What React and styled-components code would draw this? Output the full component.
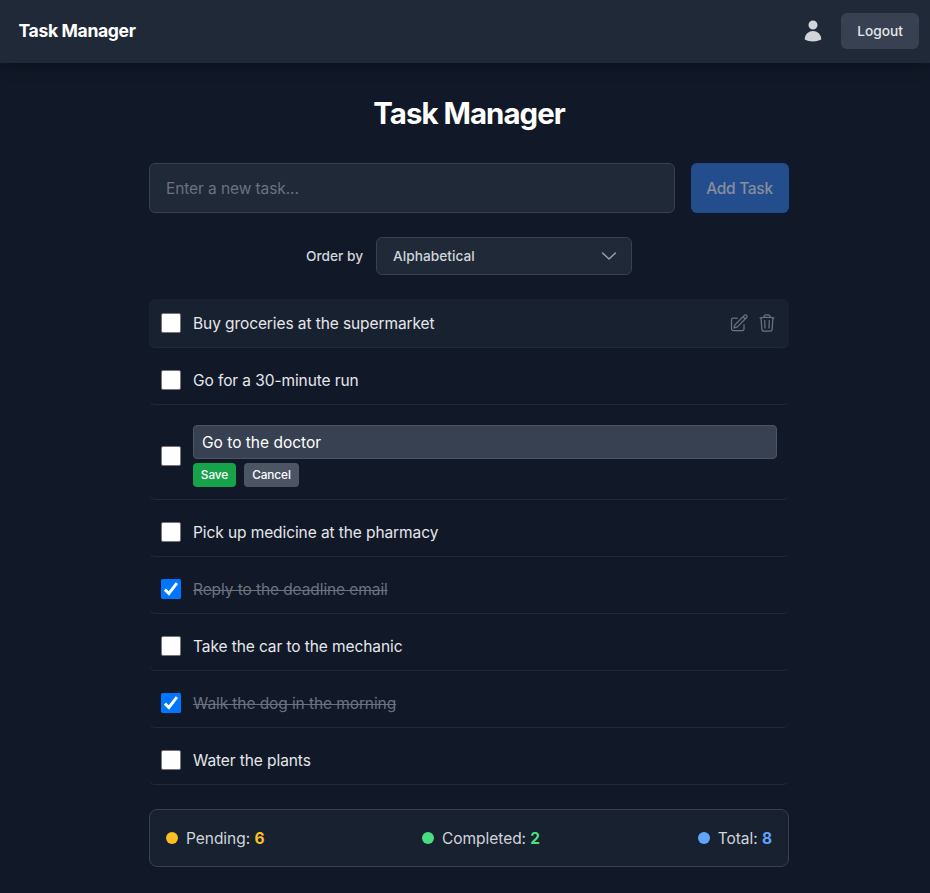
import React, { useState } from "react";
import styled, { createGlobalStyle } from "styled-components";
import { HiUser, HiOutlinePencilSquare, HiOutlineTrash } from "react-icons/hi2";

const GlobalStyle = createGlobalStyle`
  *, *::before, *::after { box-sizing: border-box; }
  body {
    margin: 0;
    background: #111827;
    color: #fff;
    font-family: Inter, "Liberation Sans", sans-serif;
    font-size: 15.5px;
    line-height: 24px;
    letter-spacing: -0.09px;
    overflow: hidden;
  }
  button, input { font: inherit; letter-spacing: inherit; }
`;

const Page = styled.div`
  min-height: 893px;
`;

const Header = styled.header`
  display: flex;
  align-items: center;
  justify-content: space-between;
  height: 63px;
  padding: 0 11px 1px 18.5px;
  background: #1f2937;
  box-shadow: 0 4px 6px -1px rgba(0, 0, 0, 0.1), 0 10px 15px -3px rgba(0, 0, 0, 0.1);
`;

const Brand = styled.span`
  font-size: 17.6px;
  font-weight: 700;
  letter-spacing: -0.37px;
`;

const HeaderActions = styled.div`
  display: flex;
  align-items: center;
  gap: 16px;
  color: #d1d5db;
`;

const LogoutButton = styled.button`
  width: 78px;
  height: 36px;
  padding: 0;
  border: 0;
  border-radius: 6px;
  background: #374151;
  color: #e5e7eb;
  font-size: 13.7px;
  font-weight: 550;
  line-height: 20px;
  letter-spacing: 0;
`;

const Main = styled.main`
  width: 640px;
  margin-left: 149px;
  padding-top: 33px;
`;

const Title = styled.h1`
  margin: 0 0 31px;
  font-size: 29.4px;
  line-height: 36px;
  font-weight: 750;
  letter-spacing: -0.95px;
  text-align: center;
`;

const AddForm = styled.form`
  display: flex;
  gap: 16px;
  height: 50px;
`;

const TaskInput = styled.input`
  flex: 1;
  min-width: 0;
  padding: 2px 16px 0;
  border: 1px solid #374151;
  border-radius: 6px;
  background: #1f2937;
  color: #fff;
  outline: none;
  &::placeholder { color: #6b7280; opacity: 1; }
`;

const AddButton = styled.button`
  width: 98px;
  padding: 2px 1px 0 0;
  border: 0;
  border-radius: 6px;
  background: #244d8e;
  color: #868e9c;
  font-weight: 500;
  letter-spacing: -0.3px;
`;

const OrderBar = styled.div`
  display: flex;
  align-items: center;
  justify-content: center;
  gap: 12px;
  height: 38px;
  margin: 24px 0;
  color: #d1d5db;
  font-size: 13.7px;
  font-weight: 550;
  letter-spacing: 0.02px;
`;

const OrderLabel = styled.span`
  width: 58px;
  white-space: nowrap;
`;

const OrderSelect = styled.div`
  display: flex;
  align-items: center;
  justify-content: space-between;
  width: 256px;
  height: 38px;
  padding: 0 14px 0 16px;
  border: 1px solid #374151;
  border-radius: 6px;
  background: #1f2937;
`;

const TaskList = styled.ul`
  display: flex;
  flex-direction: column;
  gap: 8px;
  margin: 0;
  padding: 0;
  list-style: none;
`;

const TaskRow = styled.li`
  display: flex;
  align-items: center;
  gap: 12px;
  padding: 12px;
  border-bottom: 1px solid #1f2937;
  border-radius: 6px;
  background: ${(p) => (p.$active ? "#18212f" : "transparent")};
`;

const Check = styled.button`
  display: flex;
  flex: none;
  width: 20px;
  height: 20px;
  padding: 0;
  border: ${(p) => (p.$checked ? "0" : "1px solid #767676")};
  border-radius: ${(p) => (p.$checked ? "1.5px" : "2px")};
  background: ${(p) => (p.$checked ? "#0075ff" : "#fff")};
`;

const TaskText = styled.span`
  flex: 1;
  height: 24px;
  line-height: 26px;
  color: ${(p) => (p.$done ? "#6b7280" : "#e5e7eb")};
  text-decoration: ${(p) => (p.$done ? "line-through" : "none")};
  text-decoration-thickness: 1px;
`;

const RowActions = styled.div`
  display: flex;
  gap: 8px;
  color: #6b7280;
`;

const Editor = styled.div`
  display: flex;
  flex: 1;
  flex-direction: column;
  gap: 4px;
`;

const EditInput = styled.input`
  width: 100%;
  height: 34px;
  padding: 0 8px;
  border: 1px solid #4b5563;
  border-radius: 4px;
  background: #374151;
  color: #fff;
  letter-spacing: 0;
  outline: none;
`;

const EditorButtons = styled.div`
  display: flex;
  gap: 8px;
`;

const SmallButton = styled.button`
  width: ${(p) => p.$width}px;
  height: 24px;
  padding: 0;
  border: 0;
  border-radius: 4px;
  background: ${(p) => p.$color};
  color: #fff;
  font-size: 11.8px;
  line-height: 16px;
  font-weight: 500;
  letter-spacing: -0.08px;
`;

const Summary = styled.footer`
  display: flex;
  align-items: center;
  justify-content: space-between;
  height: 58px;
  margin-top: 24px;
  padding: 0 16px;
  border: 1px solid #374151;
  border-radius: 8px;
  background: #18212f;
  color: #d1d5db;
  letter-spacing: -0.04px;
`;

const Stat = styled.div`
  display: flex;
  align-items: center;
  gap: 8px;
  white-space: pre;
`;

const StatText = styled.span`
  height: 24px;
  line-height: 26px;
`;

const Dot = styled.span`
  width: 12px;
  height: 12px;
  border-radius: 50%;
  background: ${(p) => p.$color};
`;

const Count = styled.span`
  color: ${(p) => p.$color};
  font-weight: 700;
`;

const TASKS = [
  { text: "Buy groceries at the supermarket", active: true },
  { text: "Go for a 30-minute run" },
  { text: "Go to the doctor", editing: true },
  { text: "Pick up medicine at the pharmacy" },
  { text: "Reply to the deadline email", done: true },
  { text: "Take the car to the mechanic" },
  { text: "Walk the dog in the morning", done: true },
  { text: "Water the plants" },
];

const STATS = [
  { label: "Pending", count: 6, color: "#fbbf24" },
  { label: "Completed", count: 2, color: "#4ade80" },
  { label: "Total", count: 8, color: "#60a5fa" },
];

function CheckMark() {
  return (
    <svg width="20" height="20" viewBox="0 0 20 20" fill="none">
      <path d="M3.9 10.6l4 3.9 8-10.3" stroke="#fff" strokeWidth="2.9" />
    </svg>
  );
}

function ChevronDown() {
  return (
    <svg width="16" height="16" viewBox="0 0 16 16" fill="none">
      <path d="M1.6 5l6.4 6 6.4-6" stroke="#9ca3af" strokeWidth="1.4" strokeLinecap="round" strokeLinejoin="round" />
    </svg>
  );
}

function Task({ task }) {
  const [done, setDone] = useState(!!task.done);
  return (
    <TaskRow $active={task.active}>
      <Check $checked={done} role="checkbox" aria-checked={done} aria-label={task.text} onClick={() => setDone(!done)}>
        {done && <CheckMark />}
      </Check>
      {task.editing ? (
        <Editor>
          <EditInput defaultValue={task.text} />
          <EditorButtons>
            <SmallButton $width={43} $color="#16a34a">Save</SmallButton>
            <SmallButton $width={55} $color="#4b5563">Cancel</SmallButton>
          </EditorButtons>
        </Editor>
      ) : (
        <TaskText $done={done}>{task.text}</TaskText>
      )}
      {task.active && (
        <RowActions>
          <HiOutlinePencilSquare size={20} />
          <HiOutlineTrash size={20} />
        </RowActions>
      )}
    </TaskRow>
  );
}

export default function App() {
  return (
    <Page>
      <GlobalStyle />
      <Header>
        <Brand>Task Manager</Brand>
        <HeaderActions>
          <HiUser size={24} />
          <LogoutButton>Logout</LogoutButton>
        </HeaderActions>
      </Header>
      <Main>
        <Title>Task Manager</Title>
        <AddForm onSubmit={(e) => e.preventDefault()}>
          <TaskInput placeholder="Enter a new task..." />
          <AddButton disabled>Add Task</AddButton>
        </AddForm>
        <OrderBar>
          <OrderLabel>Order by</OrderLabel>
          <OrderSelect>
            Alphabetical
            <ChevronDown />
          </OrderSelect>
        </OrderBar>
        <TaskList>
          {TASKS.map((task) => (
            <Task key={task.text} task={task} />
          ))}
        </TaskList>
        <Summary>
          {STATS.map((s) => (
            <Stat key={s.label}>
              <Dot $color={s.color} />
              <StatText>
                {s.label}: <Count $color={s.color}>{s.count}</Count>
              </StatText>
            </Stat>
          ))}
        </Summary>
      </Main>
    </Page>
  );
}
